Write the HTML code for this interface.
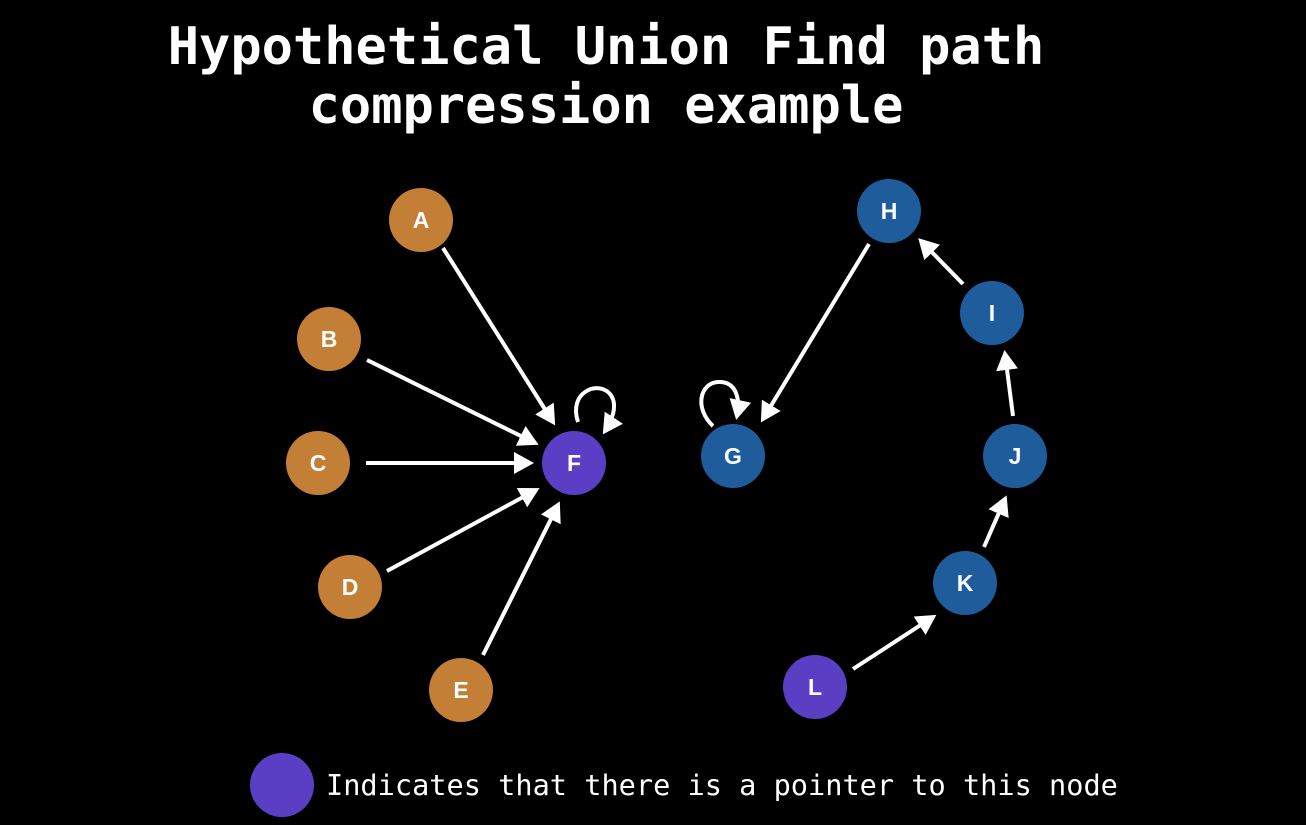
<!DOCTYPE html>
<html><head><meta charset="utf-8"><style>
html,body{margin:0;padding:0;background:#000;width:1306px;height:825px;overflow:hidden}
svg{display:block}
.t{font-family:"DejaVu Sans Mono","Liberation Mono",monospace;font-weight:bold;fill:#fff;font-size:52px}
.n{font-family:"Liberation Sans",sans-serif;font-weight:bold;fill:#fff;font-size:23px;text-anchor:middle}
.l{font-family:"DejaVu Sans Mono","Liberation Mono",monospace;fill:#fff;font-size:28.6px}
</style></head><body>
<svg width="1306" height="825" viewBox="0 0 1306 825">
<defs><marker id="ah" markerWidth="6" markerHeight="6" refX="4" refY="2.75" orient="auto" markerUnits="strokeWidth"><path d="M0,0 L5,2.75 L0,5.5 z" fill="#fff"/></marker></defs>
<text class="t" x="606" y="64" text-anchor="middle">Hypothetical Union Find path</text>
<text class="t" x="606" y="123" text-anchor="middle">compression example</text>
<g stroke="#fff" stroke-width="4" fill="none" marker-end="url(#ah)">
<line x1="443" y1="248" x2="553" y2="422"/>
<line x1="367" y1="360" x2="535" y2="443"/>
<line x1="366" y1="463" x2="530" y2="463"/>
<line x1="387" y1="571" x2="536" y2="490"/>
<line x1="483" y1="655" x2="558" y2="505"/>
<line x1="869" y1="244" x2="763" y2="419"/>
<line x1="963" y1="284" x2="921" y2="241"/>
<line x1="1013" y1="416" x2="1005" y2="354"/>
<line x1="984" y1="547" x2="1005" y2="499"/>
<line x1="853" y1="669" x2="933" y2="617"/>
<path d="M578,422 C568,392 598,380 610,394 C619,405 611,422 605,431"/>
<path d="M713,426 C694,408 700,383 718,382 C738,381 740,402 737,416"/>
</g>
<g>
<circle cx="421" cy="220" r="32" fill="#c47f36"/>
<circle cx="329" cy="339" r="32" fill="#c47f36"/>
<circle cx="318" cy="463" r="32" fill="#c47f36"/>
<circle cx="350" cy="587" r="32" fill="#c47f36"/>
<circle cx="461" cy="690" r="32" fill="#c47f36"/>
<circle cx="574" cy="463" r="32" fill="#5a3fc4"/>
<circle cx="733" cy="456" r="32" fill="#1f5c9b"/>
<circle cx="889" cy="211" r="32" fill="#1f5c9b"/>
<circle cx="992" cy="313" r="32" fill="#1f5c9b"/>
<circle cx="1015" cy="456" r="32" fill="#1f5c9b"/>
<circle cx="965" cy="583" r="32" fill="#1f5c9b"/>
<circle cx="815" cy="687" r="32" fill="#5a3fc4"/>
<circle cx="282" cy="785" r="32" fill="#5a3fc4"/>
</g>
<text class="n" x="421" y="228">A</text>
<text class="n" x="329" y="347">B</text>
<text class="n" x="318" y="471">C</text>
<text class="n" x="350" y="595">D</text>
<text class="n" x="461" y="698">E</text>
<text class="n" x="574" y="471">F</text>
<text class="n" x="733" y="464">G</text>
<text class="n" x="889" y="219">H</text>
<text class="n" x="992" y="321">I</text>
<text class="n" x="1015" y="464">J</text>
<text class="n" x="965" y="591">K</text>
<text class="n" x="815" y="695">L</text>
<text class="l" x="326" y="795">Indicates that there is a pointer to this node</text>
</svg>
</body></html>
